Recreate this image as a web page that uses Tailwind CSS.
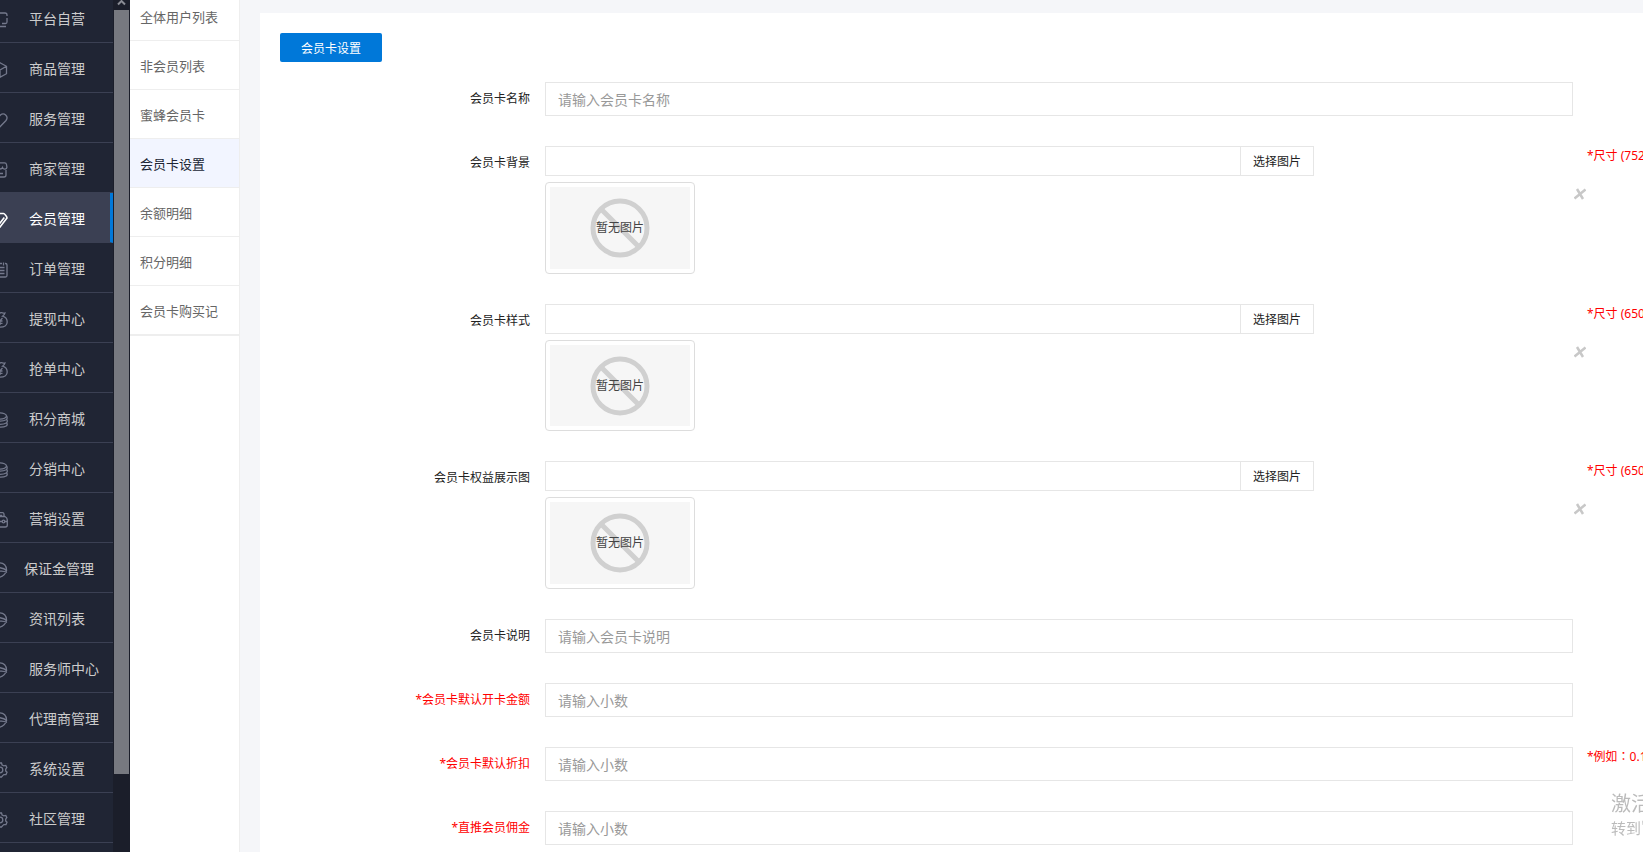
<!DOCTYPE html>
<html lang="zh-CN">

<head>
  <meta charset="UTF-8" />
  <meta name="viewport" content="width=device-width, initial-scale=1.0" />
  <title>会员卡设置</title>
  <script src="https://cdn.jsdelivr.net/npm/@tailwindcss/browser@4"></script>
</head>

<body class="flex h-screen overflow-hidden bg-[#f5f6f9] font-['Noto_Sans','Noto_Sans_CJK_SC',sans-serif] text-xs text-[#222]">
  <!-- icons -->
  <svg class="hidden">
    <symbol id="i-shop" viewBox="0 0 16 16"><path d="M2 1h11a2 2 0 0 1 2 2v1M15 6v4a1.500 1.500 0 0 1-1.500 1.500H10M8 11.500H2.500A1.500 1.500 0 0 1 1 10V3M2 14.500h12" /></symbol>
    <symbol id="i-cube" viewBox="0 0 16 16"><path d="M8 .7l6.500 3.600v7.400L8 15.300l-6.500-3.600V4.300zM1.500 4.300L8 8l6.500-3.700M8 8v7.300" /></symbol>
    <symbol id="i-heart" viewBox="0 0 16 16"><path d="M8 14.800L2 8.500C-1 4.500 4 -.5 8 3.500c4-4 9 1 6 5z" /></symbol>
    <symbol id="i-store" viewBox="0 0 16 16"><path d="M3 .8h9.500a2 2 0 0 1 2 1.700l.4 2.500c.2 2.500-3.400 3-4.400.5-.8 2-4.200 2-5 0-1 2.500-4.600 2-4.400-.5L1.500 2.500A2 2 0 0 1 3 .8zM2 8v5a2 2 0 0 0 2 2h8a2 2 0 0 0 2-2V8M6 11.500h5" /></symbol>
    <symbol id="i-vip" viewBox="0 0 16 16"><path stroke-width="1.600" d="M4 1.500h7.500c1 0 3.500 3 3.500 4.500L8 15 1 6c0-1.500 2-4.500 3-4.500zM12.300 5.500L8 11 4.500 7.500" /></symbol>
    <symbol id="i-order" viewBox="0 0 16 16"><path d="M2 1.500h1.500M6 1.500h4M13 1.500h.5A1.500 1.500 0 0 1 15 3v10.500a1.500 1.500 0 0 1-1.500 1.500h-11A1.500 1.500 0 0 1 1 13.500V2M5 .5v3M11.500 .5v3M4 5.500h8.500M4 8.500h8.500M4 11.500h8.500" /></symbol>
    <symbol id="i-money" viewBox="0 0 16 16"><path d="M5.500 4C3 1.500 4 .5 6 1c1 .5 2 0 3-.3 1-.2 2.500.8 4 .3-.2 1.500-1.500 2.500-2.500 3.200 3 .8 4.700 3.300 4.700 5.800 0 3-2.500 5.200-7.200 5.200S.8 13 .8 10c0-2.500 1.700-5 4.700-6M5.500 6l2.500 2.700L10.500 6M5.500 9h5M5.500 11.300h5M8 8.700V13" /></symbol>
    <symbol id="i-coins" viewBox="0 0 16 16"><ellipse cx="7.500" cy="4" rx="7" ry="3.200" /><path d="M.5 4v8M14.500 4c.8 1 1 3-.3 3.800C11 9.600 4 9.600.5 7.500M14.800 7.500c.8 1.200.7 2.700-.6 3.500-3 1.800-10.200 1.800-13.700 0M14.800 11c.8 1.200.3 2.500-.6 3-3 1.700-10.200 1.700-13.700-1" /></symbol>
    <symbol id="i-bag" viewBox="0 0 16 16"><path d="M4 4V2A1.500 1.500 0 0 1 5.500 .700h5A1.500 1.500 0 0 1 12 2v2.500M5.500 4.500V3.500h4v1M3 4.500h10c1.500.7 2.300 2 2.300 3.500v5a2 2 0 0 1-2 2H2.700a2 2 0 0 1-2-2V8c0-1.500.8-2.800 2.300-3.500zM1 9.500h3M6 9.500h4M13 9.500h2" /><circle cx="11.500" cy="9.500" r="1.300" /></symbol>
    <symbol id="i-shell" viewBox="0 0 16 16"><path d="M1 6.500C2 3 4.500 .8 8 .8c3.700 0 6.500 3 6.500 7v1C13.500 12 11 14.500 7 15.300 3 14 1 11 1 6.500zM1 7C5 5 11 5 15 9M8 9.200c2.500-.5 5 .3 7 1.300M5 8.500c1 2.500.5 5 2 6.800" /></symbol>
    <symbol id="i-gear" viewBox="0 0 16 16"><path d="M6.500 1h3l.6 2 1.800.8 1.900-.4 1 2-1.100 1.700v1.800l1.300 1.300-1 2.300-2.100.1-1.200 1L9.500 15h-3l-.6-2-1.800-.8-1.900.4-1-2 1.100-1.700V7.100L1.200 5.400l1-2 1.900.4L5.900 3z" /><circle cx="8" cy="8" r="2.800" /></symbol>
    <symbol id="i-none" viewBox="0 0 60 60"><circle cx="30" cy="30" r="27" /><path d="M11 11l38 38" /></symbol>
    <symbol id="i-close" viewBox="0 0 12 12"><path d="M3 1l6 10M11.500 1.500L.5 10.500" /></symbol>
  </svg>

  <!-- main menu -->
  <aside class="flex shrink-0 bg-[#1b1e2a]">
    <nav class="-mt-[7px] w-[113px] overflow-hidden bg-[#202534] text-sm text-[#ccc] [&_a]:flex [&_a]:h-[50px] [&_a]:items-center [&_a]:gap-[21px] [&_a]:border-b [&_a]:border-[#3b4053] [&_a]:pt-0.5 [&_a]:whitespace-nowrap [&_svg]:-ml-2 [&_svg]:mt-0.5 [&_svg]:size-4 [&_svg]:shrink-0 [&_svg]:fill-none [&_svg]:stroke-[#74798c] [&_svg]:stroke-[1.300]">
      <a href="#"><svg><use href="#i-shop" /></svg>平台自营</a>
      <a href="#"><svg><use href="#i-cube" /></svg>商品管理</a>
      <a href="#"><svg><use href="#i-heart" /></svg>服务管理</a>
      <a href="#"><svg><use href="#i-store" /></svg>商家管理</a>
      <a href="#" class="border-r-3 border-r-[#0078d9]! bg-[#3b4053] text-white [&_svg]:stroke-white!"><svg><use href="#i-vip" /></svg>会员管理</a>
      <a href="#"><svg><use href="#i-order" /></svg>订单管理</a>
      <a href="#"><svg><use href="#i-money" /></svg>提现中心</a>
      <a href="#"><svg><use href="#i-money" /></svg>抢单中心</a>
      <a href="#"><svg><use href="#i-coins" /></svg>积分商城</a>
      <a href="#"><svg><use href="#i-coins" /></svg>分销中心</a>
      <a href="#"><svg><use href="#i-bag" /></svg>营销设置</a>
      <a href="#" class="gap-4!"><svg><use href="#i-shell" /></svg>保证金管理</a>
      <a href="#"><svg><use href="#i-shell" /></svg>资讯列表</a>
      <a href="#"><svg><use href="#i-shell" /></svg>服务师中心</a>
      <a href="#"><svg><use href="#i-shell" /></svg>代理商管理</a>
      <a href="#"><svg><use href="#i-gear" /></svg>系统设置</a>
      <a href="#"><svg><use href="#i-gear" /></svg>社区管理</a>
    </nav>
    <!-- scrollbar -->
    <div class="flex w-[17px] flex-col px-px pb-[78px]">
      <svg class="h-2.5 w-full fill-none stroke-[#8a8c94] stroke-2" viewBox="0 0 15 10"><path d="M4 4.500L7.500 1 11 4.500" /></svg>
      <div class="flex-1 bg-[#777980]"></div>
    </div>
  </aside>

  <!-- sub menu -->
  <nav class="w-[110px] shrink-0 overflow-hidden border-r border-[#eee] bg-white text-[13px] text-[#666] [&_a]:flex [&_a]:h-[49px] [&_a]:items-center [&_a]:border-b [&_a]:border-[#eee] [&_a]:pt-1 [&_a]:pl-2.5 [&_a]:whitespace-nowrap">
    <div class="-mt-2 border-b border-[#eee]">
      <a href="#">全体用户列表</a>
      <a href="#">非会员列表</a>
      <a href="#">蜜蜂会员卡</a>
      <a href="#" class="bg-[#f2f5ff] text-[#202534]">会员卡设置</a>
      <a href="#">余额明细</a>
      <a href="#">积分明细</a>
      <a href="#">会员卡购买记</a>
    </div>
  </nav>

  <main class="min-w-0 flex-1 overflow-hidden pt-[13px] pl-5">
    <div class="min-h-full bg-white pt-5 pl-5">
      <button type="button" class="h-[29px] w-[102px] rounded-xs bg-[#0078d9] pt-0.5 text-white">会员卡设置</button>

      <form class="mt-5 flex flex-col gap-[30px] [&_input]:min-w-0 [&_input]:border [&_input]:border-[#e6e6e6] [&_input]:px-3 [&_input]:text-sm [&_input]:placeholder-[#999] [&_label]:w-[250px] [&_label]:shrink-0 [&_label]:pt-[9px] [&_label]:text-right [&_label]:leading-4">
        <div class="flex">
          <label for="name">会员卡名称</label>
          <input id="name" type="text" placeholder="请输入会员卡名称" class="ml-[15px] h-[34px] flex-1" />
          <div class="w-[70px]"></div>
        </div>

        <div class="flex">
          <label for="bg">会员卡背景</label>
          <div class="ml-[15px] flex-1">
            <div class="flex h-[30px] w-[74.8%]">
              <input id="bg" type="text" class="flex-1" />
              <button type="button" class="w-[73px] border border-l-0 border-[#e6e6e6] pt-0.5">选择图片</button>
            </div>
            <div class="mt-1.5 h-[92px] w-[150px] rounded-sm border border-[#ddd] p-1">
              <div class="relative flex h-full items-center justify-center bg-[#f6f6f6] text-[#444]">
                <svg class="absolute size-[60px] fill-none stroke-[#d0d0d0] stroke-5"><use href="#i-none" /></svg>
                <span class="relative">暂无图片</span>
              </div>
            </div>
          </div>
          <div class="w-[70px] overflow-hidden whitespace-nowrap">
            <p class="pt-0.5 pl-3.5 leading-4 text-[#f00]">*尺寸 (752</p>
            <button type="button" aria-label="删除" class="mt-6 ml-px block"><svg class="size-3 fill-none stroke-[#c8c8c8] stroke-[2.500]"><use href="#i-close" /></svg></button>
          </div>
        </div>

        <div class="flex">
          <label for="style">会员卡样式</label>
          <div class="ml-[15px] flex-1">
            <div class="flex h-[30px] w-[74.8%]">
              <input id="style" type="text" class="flex-1" />
              <button type="button" class="w-[73px] border border-l-0 border-[#e6e6e6] pt-0.5">选择图片</button>
            </div>
            <div class="mt-1.5 h-[91px] w-[150px] rounded-sm border border-[#ddd] p-1">
              <div class="relative flex h-full items-center justify-center bg-[#f6f6f6] text-[#444]">
                <svg class="absolute size-[60px] fill-none stroke-[#d0d0d0] stroke-5"><use href="#i-none" /></svg>
                <span class="relative">暂无图片</span>
              </div>
            </div>
          </div>
          <div class="w-[70px] overflow-hidden whitespace-nowrap">
            <p class="pt-0.5 pl-3.5 leading-4 text-[#f00]">*尺寸 (650</p>
            <button type="button" aria-label="删除" class="mt-6 ml-px block"><svg class="size-3 fill-none stroke-[#c8c8c8] stroke-[2.500]"><use href="#i-close" /></svg></button>
          </div>
        </div>

        <div class="flex">
          <label for="rights">会员卡权益展示图</label>
          <div class="ml-[15px] flex-1">
            <div class="flex h-[30px] w-[74.8%]">
              <input id="rights" type="text" class="flex-1" />
              <button type="button" class="w-[73px] border border-l-0 border-[#e6e6e6] pt-0.5">选择图片</button>
            </div>
            <div class="mt-1.5 h-[92px] w-[150px] rounded-sm border border-[#ddd] p-1">
              <div class="relative flex h-full items-center justify-center bg-[#f6f6f6] text-[#444]">
                <svg class="absolute size-[60px] fill-none stroke-[#d0d0d0] stroke-5"><use href="#i-none" /></svg>
                <span class="relative">暂无图片</span>
              </div>
            </div>
          </div>
          <div class="w-[70px] overflow-hidden whitespace-nowrap">
            <p class="pt-0.5 pl-3.5 leading-4 text-[#f00]">*尺寸 (650</p>
            <button type="button" aria-label="删除" class="mt-6 ml-px block"><svg class="size-3 fill-none stroke-[#c8c8c8] stroke-[2.500]"><use href="#i-close" /></svg></button>
          </div>
        </div>

        <div class="flex">
          <label for="desc">会员卡说明</label>
          <input id="desc" type="text" placeholder="请输入会员卡说明" class="ml-[15px] h-[34px] flex-1" />
          <div class="w-[70px]"></div>
        </div>

        <div class="flex">
          <label for="price" class="text-[#f00]">*会员卡默认开卡金额</label>
          <input id="price" type="text" placeholder="请输入小数" class="ml-[15px] h-[34px] flex-1" />
          <div class="w-[70px]"></div>
        </div>

        <div class="flex">
          <label for="discount" class="text-[#f00]">*会员卡默认折扣</label>
          <input id="discount" type="text" placeholder="请输入小数" class="ml-[15px] h-[34px] flex-1" />
          <p lang="zh-TW" class="w-[70px] overflow-hidden pt-0.5 pl-3.5 font-['Noto_Sans','Noto_Sans_CJK_TC',sans-serif] leading-4 whitespace-nowrap text-[#f00]">*例如：0.1</p>
        </div>

        <div class="flex">
          <label for="commission" class="text-[#f00]">*直推会员佣金</label>
          <input id="commission" type="text" placeholder="请输入小数" class="ml-[15px] h-[34px] flex-1" />
          <div class="w-[70px]"></div>
        </div>
      </form>
    </div>
  </main>

  <div class="pointer-events-none fixed right-0 bottom-3 w-8 overflow-hidden whitespace-nowrap text-[#bbb]">
    <p class="pt-0.5 text-xl leading-6">激活</p>
    <p class="font-['Noto_Sans_CJK_SC',sans-serif] text-[15px] leading-6">转到"</p>
  </div>
</body>

</html>
